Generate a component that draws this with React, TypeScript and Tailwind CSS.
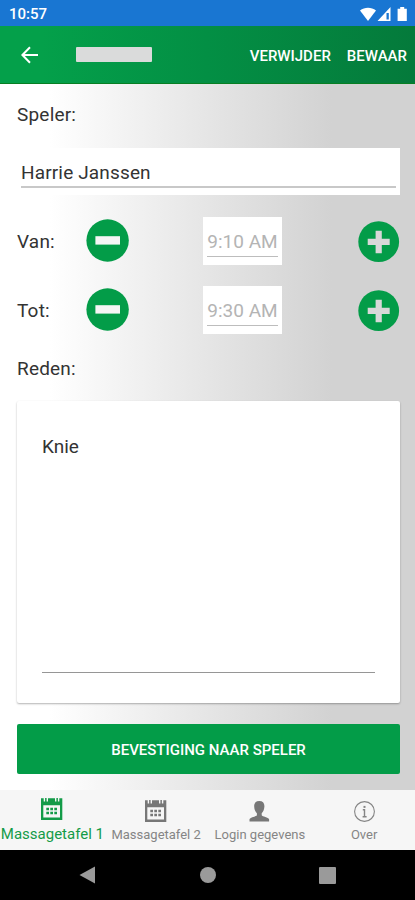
import React from "react";

type TimeRowProps = {
  label: string;
  value: string;
};

const MinusButton = () => (
  <button className="w-[43px] h-[43px] -mt-[2px] cursor-pointer">
    <svg viewBox="0 0 43 43" width="43" height="43">
      <circle cx="21.6" cy="21.5" r="21.2" fill="#039c48" />
      <rect x="9.4" y="17.2" width="24.6" height="8.4" fill="#f5f5f5" />
    </svg>
  </button>
);

const PlusButton = () => (
  <button className="w-[42px] h-[42px] cursor-pointer">
    <svg viewBox="0 0 42 42" width="42" height="42">
      <circle cx="20.7" cy="20.7" r="20.4" fill="#039c48" />
      <path d="M17.600 9.700h6.200v8h7.900v6.200h-7.900v8.300h-6.200v-8.300H9.700v-6.200h7.900z" fill="#d8d8d8" />
    </svg>
  </button>
);

const TimeRow = ({ label, value }: TimeRowProps) => (
  <div className="flex items-center h-12 pl-[17px] pr-[15px]">
    <span className="w-[69px] pt-[2px] text-[19px] tracking-[0.2px] text-[#333]">{label}</span>
    <MinusButton />
    <div className="ml-[74px] w-[79px] h-12 bg-white px-1 pt-[9px]">
      <div className="h-[31px] border-b border-[#bdbdbd] text-[19px] leading-[31px] text-center whitespace-nowrap text-[#b4b4b4]">
        {value}
      </div>
    </div>
    <div className="ml-auto mt-px h-[42px]">
      <PlusButton />
    </div>
  </div>
);

const CalendarIcon = () => (
  <svg width="22" height="22" viewBox="0 0 22 22" fill="currentColor">
    <path
      fillRule="evenodd"
      d="M0 .3h2.700v3.200h1.400V0h1.500v3.500H7V.3h7v3.200h1.400V0h1.500v3.500h1.400V.3H21.300V22H0zM2.300 7.300V19.500H19V7.300z"
    />
    <path d="M5.300 9.700h2.700v2.500H5.300zM9.300 9.700h2.700v2.500H9.300zM13.300 9.700h2.700v2.500h-2.700zM5.300 13.800h2.700v2.500H5.300zM9.300 13.800h2.700v2.500H9.300zM13.300 13.800h2.700v2.500h-2.700z" />
  </svg>
);

const PersonIcon = () => (
  <svg width="21" height="21" viewBox="0 0 21 21" fill="#777">
    <path d="M10.300 0C6.800 0 5 2.100 5.200 5.500c.1 3 1.200 5.300 2.700 6.800v1.900C7.300 15.600 1.200 16 .5 18.200V20.600h19.600V18.200c-.7-2.200-6.800-2.600-7.400-4v-1.900c1.500-1.500 2.600-3.800 2.700-6.800C15.600 2.100 13.800 0 10.300 0z" />
  </svg>
);

const InfoIcon = () => (
  <svg width="21" height="21" viewBox="0 0 21 21" fill="none" stroke="#858585">
    <circle cx="10.5" cy="10.5" r="9.900" strokeWidth="1.1" />
    <path d="M10.500 4.900v2" strokeWidth="2" />
    <path d="M8.800 8.700h1.700v7.100M8.600 15.800h4" strokeWidth="1.4" />
  </svg>
);

const App = () => {
  return (
    <div className="flex flex-col w-[415px] h-[900px] overflow-hidden font-[Roboto,sans-serif] bg-black">
      {/* STATUS BAR */}
      <div className="flex items-center justify-between h-[26px] shrink-0 pl-[9px] pr-[7px] pt-[2px] bg-[#1976d2] text-white">
        <span className="text-[15px] font-medium">10:57</span>
        <svg width="48" height="15" viewBox="0 0 48 15" fill="#fff">
          <path d="M0 3.600C4.600-.2 11.400-.2 16 3.600L8 14z" />
          <path d="M30.500 0v14H17.500zM26.500 6v6.500h2.300V6z" fillRule="evenodd" />
          <path d="M40.200 0h4v1.700h2.600V14h-9.200V1.700h2.600z" />
        </svg>
      </div>

      {/* HEADER */}
      <div className="flex items-center h-[58px] shrink-0 pl-[21px] pr-2 border-b border-[#087f23] bg-linear-to-r from-[#04a04a] from-10% via-[#038f44] via-50% to-[#047a3b] text-white">
        <svg width="18" height="18" viewBox="0 0 18 18" fill="none" stroke="#fff" strokeWidth="2">
          <path d="M17 9H2M9 1.200L1.400 9L9 16.800" />
        </svg>
        <div className="ml-[37px] w-[76px] h-[15px] rounded-[1px] bg-[#dadbdb]" />
        <div className="ml-auto flex gap-4 pt-[3px] text-[15px] font-medium whitespace-nowrap">
          <button>VERWIJDER</button>
          <button>BEWAAR</button>
        </div>
      </div>

      {/* FORM */}
      <div className="h-[706px] shrink-0 bg-linear-to-r from-white from-12% via-[#e8e8e8] via-46% to-[#d2d2d2] to-80%">
        <div className="h-16 pl-[17px] pt-[17px] text-[19px] leading-7 tracking-[0.2px] text-[#333]">Speler:</div>
        <div className="ml-[17px] w-[383px] h-[47px] px-1 pt-[9px] bg-white">
          <div className="h-[31px] border-b-2 border-[#c8c8c8] text-[19px] leading-[31px] tracking-[0.15px] text-[#333]">
            Harrie Janssen
          </div>
        </div>
        <div className="flex flex-col gap-[21px] pt-[22px]">
          <TimeRow label="Van:" value="9:10 AM" />
          <TimeRow label="Tot:" value="9:30 AM" />
        </div>
        <div className="h-[67px] pl-[17px] pt-[21px] text-[19px] leading-7 tracking-[0.2px] text-[#333]">Reden:</div>
        <div className="ml-[17px] w-[383px] h-[302px] px-[25px] pt-[32px] rounded-[2px] bg-white shadow-[0_1px_2px_rgba(0,0,0,0.3)]">
          <div className="h-[240px] border-b border-[#969696] text-[19px] leading-7 text-[#333]">Knie</div>
        </div>
        <button className="block ml-[17px] mt-[21px] w-[383px] h-[50px] pt-[2px] rounded-[2px] bg-[#039c48] text-[15px] font-medium text-white">
          BEVESTIGING NAAR SPELER
        </button>
      </div>

      {/* TABS */}
      <div className="grid grid-cols-4 h-[60px] shrink-0 bg-[#f6f6f6] text-[13px] text-[#858585] whitespace-nowrap">
        <div className="flex flex-col items-center pl-px pt-2 text-[15px] text-[#139b48]">
          <CalendarIcon />
          <span className="mt-[4px] leading-5">Massagetafel 1</span>
        </div>
        <div className="flex flex-col items-center pl-px pt-[10px]">
          <span className="h-[22px] text-[#777]">
            <CalendarIcon />
          </span>
          <span className="mt-[3px] leading-5">Massagetafel 2</span>
        </div>
        <div className="flex flex-col items-center pl-px pt-[11px]">
          <PersonIcon />
          <span className="mt-[3px] leading-5">Login gegevens</span>
        </div>
        <div className="flex flex-col items-center pl-[2px] pt-[11px]">
          <InfoIcon />
          <span className="mt-[3px] leading-5">Over</span>
        </div>
      </div>

      {/* SYSTEM NAVIGATION */}
      <div className="flex items-center h-[50px] shrink-0 px-[79px] justify-between bg-black">
        <svg width="17" height="18" viewBox="0 0 17 18" fill="#9a9a9a">
          <path d="M16 .5v17L.5 9z" />
        </svg>
        <div className="w-4 h-4 rounded-full bg-[#9a9a9a]" />
        <div className="w-[17px] h-[17px] rounded-[1px] bg-[#9a9a9a]" />
      </div>
    </div>
  );
};

export default App;
